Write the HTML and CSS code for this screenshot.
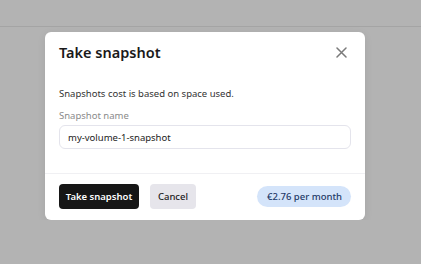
FILE: index.html
```html
<!DOCTYPE html>
<html lang="en">
<head>
  <meta charset="UTF-8" />
  <meta name="viewport" content="width=device-width, initial-scale=1.0">
  <title>Take snapshot</title>
  <link rel="stylesheet" href="styles.css">
</head>
<body>
  <div class="topbar"></div>

  <div class="overlay">
    <div class="modal">
      <div class="modal-header">
        <h2>Take snapshot</h2>
        <button class="close" aria-label="Close">
          <svg width="11" height="11" viewBox="0 0 11 11">
            <path d="M1 1 L10 10 M10 1 L1 10" stroke="#7a7a7a" stroke-width="1.5" stroke-linecap="round" fill="none"/>
          </svg>
        </button>
      </div>

      <div class="modal-body">
        <p class="info">Snapshots cost is based on space used.</p>
        <label class="field-label" for="snapName">Snapshot name</label>
        <input type="text" id="snapName" value="my-volume-1-snapshot">
      </div>

      <div class="modal-footer">
        <button class="btn primary">Take snapshot</button>
        <button class="btn secondary">Cancel</button>
        <span class="price">€2.76 per month</span>
      </div>
    </div>
  </div>
</body>
</html>
```

FILE: styles.css
```css
body {
  font-family: 'Noto Sans', 'Open Sans', sans-serif;
  background-color: #b3b3b3;
  margin: 0;
  padding: 0;
  color: #222;
}

.topbar {
  height: 26px;
  border-bottom: 1px solid #a4a4a4;
}

.overlay {
  padding: 5px 0 0 45px;
}

.modal {
  width: 320px;
  background: white;
  border-radius: 6px;
  box-shadow: 0 2px 8px rgba(0, 0, 0, 0.08);
}

.modal-header {
  display: flex;
  justify-content: space-between;
  align-items: center;
  padding: 9px 18px 0 14px;
}

.modal-header h2 {
  margin: 0;
  font-size: 14.5px;
  line-height: 22px;
  font-weight: 600;
  color: #1a1a1a;
}

.close {
  background: none;
  border: none;
  padding: 0;
  width: 11px;
  height: 11px;
  display: flex;
  cursor: pointer;
}

.modal-body {
  padding: 23px 14px 24px;
  display: flex;
  flex-direction: column;
}

.info {
  margin: 0;
  font-size: 9.5px;
  line-height: 16px;
  color: #333;
}

.field-label {
  margin-top: 6px;
  font-size: 9.5px;
  line-height: 16px;
  color: #8a8a8a;
}

.modal-body input {
  margin-top: 1px;
  height: 24px;
  box-sizing: border-box;
  padding: 0 8px;
  border: 1.5px solid #e4e4ec;
  border-radius: 6px;
  font-family: inherit;
  font-size: 9.5px;
  color: #222;
  outline: none;
}

.modal-footer {
  display: flex;
  align-items: center;
  gap: 11px;
  padding: 10px 14px 11px;
  border-top: 1px solid #f0f0f3;
}

.btn {
  height: 25px;
  border: none;
  border-radius: 4px;
  font-family: inherit;
  font-size: 9.5px;
  padding: 0;
  white-space: nowrap;
  cursor: pointer;
}

.btn.primary {
  background-color: #161616;
  color: white;
  font-weight: 600;
  width: 80px;
}

.btn.secondary {
  background-color: #e6e5eb;
  color: #222;
  font-weight: 500;
  width: 46px;
}

.price {
  margin-left: auto;
  background-color: #d4e4fa;
  color: #1f3a68;
  font-size: 9.5px;
  font-weight: 500;
  line-height: 21px;
  padding: 0 9px 0 10px;
  border-radius: 11px;
}
```
